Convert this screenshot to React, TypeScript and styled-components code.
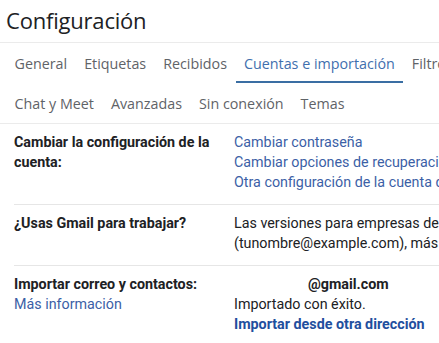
import React from "react";
import styled, { createGlobalStyle } from "styled-components";

const Global = createGlobalStyle`
  html, body { margin: 0; padding: 0; background: #fff; }
  body { font-family: Roboto, "Liberation Sans", sans-serif; overflow: hidden; }
`;

const Page = styled.div`
  width: 439px;
  height: 343px;
  overflow: hidden;
  background: #fff;
`;

const Header = styled.div`
  height: 42px;
  display: flex;
  align-items: center;
  padding-left: 6px;
  border-bottom: 1px solid #ebebeb;
`;

const Title = styled.h1`
  margin: 0;
  margin-top: -2px;
  font-family: "Open Sans", sans-serif;
  font-weight: 400;
  font-size: 22px;
  color: #202124;
  letter-spacing: -0.2px;
  white-space: nowrap;
`;

const TabRow = styled.div<{ $last?: boolean }>`
  display: flex;
  height: 40px;
  padding-left: 6px;
  border-bottom: ${(p) => (p.$last ? "1px solid #ebebeb" : "none")};
  white-space: nowrap;
`;

const Tab = styled.div<{ $active?: boolean }>`
  display: flex;
  align-items: center;
  padding: 0 8.5px;
  font-family: "Open Sans", sans-serif;
  font-size: 14.3px;
  color: ${(p) => (p.$active ? "#3f6fae" : "#5f6368")};
  border-bottom: 2px solid ${(p) => (p.$active ? "#3a6ea3" : "transparent")};
  box-sizing: border-box;
  padding-top: 2px;
  flex-shrink: 0;
`;

const Section = styled.div<{ $first?: boolean }>`
  display: grid;
  grid-template-columns: 220px 1fr;
  margin-left: 14px;
  padding: 8px 0 12px;
  border-top: ${(p) => (p.$first ? "none" : "1px solid #e6e6e6")};
  font-size: 14.3px;
  line-height: 20px;
`;

const Label = styled.div`
  font-weight: 700;
  color: #202124;
  padding-right: 6px;
`;

const Value = styled.div`
  white-space: nowrap;
  color: #202124;
`;

const Line = styled.div``;

const Link = styled.a<{ $bold?: boolean }>`
  display: block;
  color: ${(p) => (p.$bold ? "#1f4f9e" : "#3c5fa6")};
  font-weight: ${(p) => (p.$bold ? 700 : 400)};
  text-decoration: none;
  cursor: pointer;
`;

const Email = styled.div`
  font-weight: 700;
  padding-left: 74px;
`;

export default function App() {
  return (
    <Page>
      <Global />
      <Header>
        <Title>Configuración</Title>
      </Header>
      <TabRow>
        <Tab>General</Tab>
        <Tab>Etiquetas</Tab>
        <Tab>Recibidos</Tab>
        <Tab $active>Cuentas e importación</Tab>
        <Tab>Filtros y direcciones bloqueadas</Tab>
      </TabRow>
      <TabRow $last>
        <Tab>Chat y Meet</Tab>
        <Tab>Avanzadas</Tab>
        <Tab>Sin conexión</Tab>
        <Tab>Temas</Tab>
      </TabRow>
      <Section $first>
        <Label>Cambiar la configuración de la cuenta:</Label>
        <Value>
          <Link>Cambiar contraseña</Link>
          <Link>Cambiar opciones de recuperación de contraseña</Link>
          <Link>Otra configuración de la cuenta de Google</Link>
        </Value>
      </Section>
      <Section>
        <Label>¿Usas Gmail para trabajar?</Label>
        <Value>
          <Line>Las versiones para empresas de Gmail ofrecen direcciones</Line>
          <Line>(tunombre@example.com), más almacenamiento y herramientas</Line>
        </Value>
      </Section>
      <Section>
        <Label>
          Importar correo y contactos:
          <Link>Más información</Link>
        </Label>
        <Value>
          <Email>@gmail.com</Email>
          <Line>Importado con éxito.</Line>
          <Link $bold>Importar desde otra dirección</Link>
        </Value>
      </Section>
    </Page>
  );
}
